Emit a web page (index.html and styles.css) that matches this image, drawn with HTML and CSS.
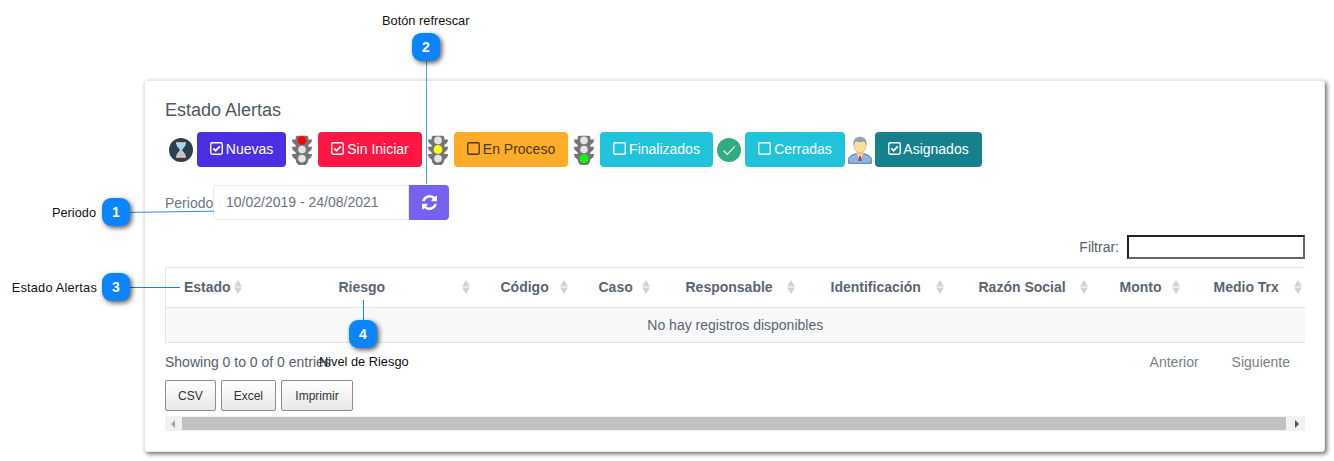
FILE: index.html
```html
<!DOCTYPE html>
<html lang="es">
<head>
<meta charset="utf-8">
<title>Estado Alertas</title>
<link rel="stylesheet" href="styles.css">
</head>
<body>
<svg class="defs" width="0" height="0" aria-hidden="true">
  <symbol id="checked" viewBox="0 0 14 14">
    <rect x=".8" y=".8" width="12.400" height="12.400" rx="1.500" fill="none" stroke="currentColor" stroke-width="1.500"/>
    <path d="M3.600 7l2.400 2.400 4.600-4.800" fill="none" stroke="currentColor" stroke-width="2"/>
  </symbol>
  <symbol id="unchecked" viewBox="0 0 14 14">
    <rect x=".8" y=".8" width="12.400" height="12.400" rx="1.500" fill="none" stroke="currentColor" stroke-width="1.500"/>
  </symbol>
  <symbol id="light" viewBox="0 0 24 34">
    <path d="M7 2h10a2 2 0 0 1 2 2v2h4c0 3-2 5-4 6v2h4c0 3-2 5-4 6v2h4c0 3-2 5-4 6a7 7 0 0 1-14 0c-2-1-4-3-4-6h4v-2c-2-1-4-3-4-6h4v-2c-2-1-4-3-4-6h4V4a2 2 0 0 1 2-2z" fill="#757575"/>
    <circle cx="12" cy="7" r="4.200" fill="#e4e4e4"/>
    <circle cx="12" cy="17" r="4.200" fill="#e4e4e4"/>
    <circle cx="12" cy="27" r="4.200" fill="#e4e4e4"/>
  </symbol>
  <symbol id="sort" viewBox="0 0 10 16">
    <path d="M5 1l4 6.500H1z" fill="#d3d3d3"/>
    <path d="M5 15L1 8.500h8z" fill="#d3d3d3"/>
  </symbol>
</svg>

<main class="card">
  <h1 class="title">Estado Alertas</h1>

  <div class="states">
    <svg class="state-icon" viewBox="0 0 24 24" aria-hidden="true">
      <circle cx="12" cy="12" r="12" fill="#2c3e50"/>
      <path d="M7.500 5h9v2.500L13 12l3.500 4.500V19h-9v-2.500L11 12 7.500 7.500z" fill="#a9d3e8"/>
      <path d="M9 17l3-3 3 3v1H9z" fill="#e8b58a"/>
      <path d="M7 5h10M7 19h10" stroke="#e8c9a8" stroke-width="1.500"/>
    </svg>
    <button class="state state-new"><svg class="box"><use href="#checked"/></svg>Nuevas</button>
    <svg class="state-icon light light-red" viewBox="0 0 24 34" aria-hidden="true"><use href="#light"/><circle cx="12" cy="7" r="4.800"/></svg>
    <button class="state state-idle"><svg class="box"><use href="#checked"/></svg>Sin Iniciar</button>
    <svg class="state-icon light light-yellow" viewBox="0 0 24 34" aria-hidden="true"><use href="#light"/><circle cx="12" cy="17" r="4.800"/></svg>
    <button class="state state-progress"><svg class="box"><use href="#unchecked"/></svg>En Proceso</button>
    <svg class="state-icon light light-green" viewBox="0 0 24 34" aria-hidden="true"><use href="#light"/><circle cx="12" cy="27" r="4.800"/></svg>
    <button class="state state-done"><svg class="box"><use href="#unchecked"/></svg>Finalizados</button>
    <svg class="state-icon" viewBox="0 0 24 24" aria-hidden="true">
      <circle cx="12" cy="12" r="12" fill="#2fac84"/>
      <path d="M6.500 12.500l3.800 3.800 7.500-8" fill="none" stroke="#e8f6f1" stroke-width="1.200"/>
    </svg>
    <button class="state state-done state-closed"><svg class="box"><use href="#unchecked"/></svg>Cerradas</button>
    <svg class="state-icon person" viewBox="0 0 24 28" aria-hidden="true">
      <path d="M.7 27.300v-4c0-3 3-4 7-5.500h8.600c4 1.500 7 2.500 7 5.500v4z" fill="#8db4e2" stroke="#4f76b0"/>
      <path d="M9 17.500l3 3 3-3-3 8z" fill="#fff"/>
      <path d="M11 20h2l.6 5h-3.200z" fill="#c0392b"/>
      <path d="M8.500 14h7v4l-3.500 2.500L8.500 18z" fill="#f0cf80"/>
      <ellipse cx="12" cy="9.500" rx="6" ry="7.500" fill="#fbe09a" stroke="#c9a35a" stroke-width=".6"/>
      <path d="M5.500 10C4.500 3 8.500 .8 12 .8s7.500 2.200 6.500 9.200c-.5-2.500-1.500-4-2.500-4.500-2 1-6 1-8 0-1 .5-2 2-2.500 4.500z" fill="#97a2b0"/>
    </svg>
    <button class="state state-assigned"><svg class="box"><use href="#checked"/></svg>Asignados</button>
  </div>

  <div class="period">
    <label class="period-label">Periodo</label>
    <div class="period-value">10/02/2019 - 24/08/2021</div>
    <button class="refresh" aria-label="Refrescar">
      <svg viewBox="0 0 1536 1536" aria-hidden="true"><path fill="currentColor" d="M1511 928q0 5-1 7-64 268-268 434.500t-478 166.500q-146 0-282.500-55t-243.500-157l-129 129q-19 19-45 19t-45-19-19-45v-448q0-26 19-45t45-19h448q26 0 45 19t19 45-19 45l-137 137q71 66 161 102t187 36q134 0 250-65t186-179q11-17 53-117 8-23 30-23h192q13 0 22.500 9.500t9.500 22.500zm25-800v448q0 26-19 45t-45 19h-448q-26 0-45-19t-19-45 19-45l138-138q-148-137-349-137-134 0-250 65t-186 179q-11 17-53 117-8 23-30 23h-199q-13 0-22.500-9.500t-9.500-22.500v-7q65-268 270-434.500t480-166.500q146 0 284 55.500t245 156.500l130-129q19-19 45-19t45 19 19 45z"/></svg>
    </button>
  </div>

  <div class="filter">
    <label class="filter-label" for="q">Filtrar:</label>
    <input class="filter-input" id="q" type="text">
  </div>

  <table class="grid">
    <colgroup>
      <col class="c1"><col class="c2"><col class="c3"><col class="c4"><col class="c5"><col class="c6"><col class="c7"><col class="c8"><col class="c9">
    </colgroup>
    <thead>
      <tr>
        <th><div class="th th-estado">Estado<svg class="sort"><use href="#sort"/></svg></div></th>
        <th><div class="th th-riesgo">Riesgo<svg class="sort"><use href="#sort"/></svg></div></th>
        <th><div class="th th-codigo">Código<svg class="sort"><use href="#sort"/></svg></div></th>
        <th><div class="th th-caso">Caso<svg class="sort"><use href="#sort"/></svg></div></th>
        <th><div class="th th-resp">Responsable<svg class="sort"><use href="#sort"/></svg></div></th>
        <th><div class="th th-ident">Identificación<svg class="sort"><use href="#sort"/></svg></div></th>
        <th><div class="th th-razon">Razón Social<svg class="sort"><use href="#sort"/></svg></div></th>
        <th><div class="th th-monto">Monto<svg class="sort"><use href="#sort"/></svg></div></th>
        <th><div class="th th-medio">Medio Trx<svg class="sort"><use href="#sort"/></svg></div></th>
      </tr>
    </thead>
    <tbody>
      <tr><td class="empty" colspan="9">No hay registros disponibles</td></tr>
    </tbody>
  </table>

  <div class="info-row">
    <span class="info">Showing 0 to 0 of 0 entries</span>
    <nav class="pager"><a>Anterior</a><a>Siguiente</a></nav>
  </div>

  <div class="exports">
    <button class="export">CSV</button>
    <button class="export">Excel</button>
    <button class="export export-print">Imprimir</button>
  </div>

  <div class="scrollbar">
    <span class="arrow arrow-left"></span>
    <span class="thumb"></span>
    <span class="arrow arrow-right"></span>
  </div>
</main>

<svg class="line-1" viewBox="0 0 84 3" aria-hidden="true"><path d="M0 2.400L84 1.200" stroke="#2a8aee" fill="none"/></svg>
<span class="line line-2"></span>
<span class="line line-3"></span>
<span class="line line-4"></span>
<span class="marker marker-1">1</span>
<span class="marker marker-2">2</span>
<span class="marker marker-3">3</span>
<span class="marker marker-4">4</span>
<span class="note note-1">Periodo</span>
<span class="note note-2">Botón refrescar</span>
<span class="note note-3">Estado Alertas</span>
<span class="note note-4">Nivel de Riesgo</span>
</body>
</html>
```

FILE: styles.css
```css
* { box-sizing: border-box; }
html, body { margin: 0; padding: 0; }
body {
  width: 1334px;
  height: 461px;
  overflow: hidden;
  background: #fff;
  font-family: "Liberation Sans", Arial, sans-serif;
  position: relative;
}
.defs { position: absolute; }

.card {
  width: 1181px;
  height: 372px;
  margin: 80px 0 0 144px;
  padding: 20px 19px 0 20px;
  background: #fff;
  border-radius: 3px;
  border: 1px solid #e6e9ed;
  box-shadow: 2px 2px 4px rgba(60, 60, 60, .75);
  color: #5a6573;
}
.title {
  margin: 0;
  font-size: 18px;
  line-height: 18px;
  font-weight: 400;
  color: #4c5866;
}
.states {
  display: flex;
  align-items: center;
  margin-top: 13px;
  padding-left: 4px;
  height: 35px;
}
.state-icon { width: 22px; height: 31px; flex: none; }
svg.state-icon[viewBox="0 0 24 24"] { width: 24px; height: 24px; }
.light circle { stroke: none; }
.light-red circle { fill: #f00; }
.light-yellow circle { fill: #ff0; }
.light-green circle { fill: #0f0; }
.light { margin: 0 5px; }
.state {
  height: 35px;
  border: 0;
  border-radius: 4px;
  padding: 0 0 2px;
  font: 14px "Liberation Sans", Arial, sans-serif;
  color: #fff;
  display: inline-flex;
  align-items: center;
  justify-content: center;
  gap: 3px;
  flex: none;
}
.box { width: 13px; height: 13px; }
.state-new { width: 89px; margin-left: 4px; background: #4b2fe3; }
.state-idle { width: 104px; background: #ff1744; }
.state-progress { width: 114px; background: #ffad28; color: #4a3b1a; }
.state-done { width: 113px; background: #20c3d9; margin-right: 4px; }
.state-closed { width: 100px; margin: 0 3px 0 4px; }
svg.person { width: 24px; height: 28px; margin-right: 3px; }
.state-assigned { width: 107px; background: #16808c; gap: 2px; }

.period {
  display: flex;
  align-items: center;
  height: 35px;
  margin-top: 18px;
}
.period-label { width: 48px; font-size: 14px; color: #6c7683; }
.period-value {
  width: 196px;
  height: 35px;
  line-height: 33px;
  padding-left: 12px;
  font-size: 14px;
  color: #6b7280;
  border: 1px solid #e8eaee;
  border-radius: 4px 0 0 4px;
}
.refresh {
  width: 40px;
  height: 35px;
  padding: 0;
  border: 0;
  border-radius: 0 4px 4px 0;
  background: #7662f0;
  color: #fff;
  display: flex;
  align-items: center;
  justify-content: center;
}
.refresh svg { width: 15px; height: 15px; }

.filter {
  display: flex;
  justify-content: flex-end;
  align-items: center;
  gap: 8px;
  margin-top: 15px;
  height: 24px;
}
.filter-label { font-size: 14px; color: #55606c; }
.filter-input {
  width: 178px;
  height: 24px;
  padding: 0;
  border-width: 2px;
  border-style: solid;
  border-color: #222 #666 #666 #222;
  background: #fff;
}

.grid {
  width: 1139px;
  margin-top: 8px;
  border-collapse: collapse;
  table-layout: fixed;
  font-size: 14px;
}
.c1 { width: 155px; }
.c2 { width: 162px; }
.c3 { width: 98px; }
.c4 { width: 87px; }
.c5 { width: 145px; }
.c6 { width: 148px; }
.c7 { width: 141px; }
.c8 { width: 94px; }
.c9 { width: 109px; }
.grid th {
  height: 40px;
  padding: 0 0 2px;
  border-top: 1px solid #e3e5e8;
  border-bottom: 1px solid #e3e5e8;
  font-weight: 700;
  color: #5a6573;
}
.grid th:first-child, .grid td { border-left: 1px solid #e3e5e8; }
.th {
  display: flex;
  align-items: center;
  padding-left: 18px;
  white-space: nowrap;
}
.sort { width: 10px; height: 16px; margin-left: auto; flex: none; }
.th-estado .sort { margin-left: 2px; }
.th-riesgo .sort { margin-right: 12px; }
.th-codigo .sort { margin-right: 12px; }
.th-caso .sort { margin-right: 17px; }
.th-resp .sort { margin-right: 17px; }
.th-ident .sort { margin-right: 16px; }
.th-razon .sort { margin-right: 13px; }
.th-monto .sort { margin-right: 15px; }
.th-medio .sort { margin-right: 2px; }
.empty {
  height: 35px;
  padding: 0;
  background: #f8f8f8;
  border-bottom: 1px solid #e3e5e8;
  text-align: center;
  color: #5a6573;
}

.info-row {
  display: flex;
  justify-content: space-between;
  align-items: center;
  height: 20px;
  margin-top: 9px;
  font-size: 14px;
}
.info { color: #55606c; }
.pager { display: flex; gap: 33px; padding-right: 15px; color: #7a7f87; }

.exports { display: flex; gap: 5px; margin-top: 8px; }
.export {
  height: 31px;
  padding: 0 12px;
  font: 12px "Liberation Sans", Arial, sans-serif;
  color: #333;
  border: 1px solid #8e8e8e;
  border-radius: 2px;
  background: linear-gradient(#fff, #e8e8e8);
}
.export-print { width: 72px; padding: 0; }

.scrollbar {
  display: flex;
  align-items: center;
  width: 1140px;
  height: 15px;
  margin-top: 5px;
  background: #f1f1f1;
}
.arrow { width: 0; height: 0; flex: none; border-style: solid; border-color: transparent; }
.arrow-left { border-width: 4px 4px 4px 0; border-right-color: #a3a3a3; margin: 0 7px 0 6px; }
.arrow-right { border-width: 4px 0 4px 4px; border-left-color: #505050; margin: 0 6px 0 9px; }
.thumb { flex: 1; height: 13px; background: #c1c1c1; }

.marker {
  position: absolute;
  width: 28px;
  height: 28px;
  border-radius: 9px;
  background: #0a84ff;
  color: #fff;
  font-size: 14px;
  font-weight: 700;
  line-height: 28px;
  text-align: center;
  box-shadow: 2px 2px 5px rgba(0, 0, 0, .65);
}
.marker-1 { left: 102px; top: 198px; }
.marker-2 { left: 412px; top: 33px; }
.marker-3 { left: 102px; top: 273px; }
.marker-4 { left: 349px; top: 320px; }
.line { position: absolute; }
.line-1 { position: absolute; left: 130px; top: 210px; width: 84px; height: 3px; }
.line-2 { left: 426px; top: 61px; width: 1px; height: 123px; background: #4aa3f5; }
.line-3 { left: 130px; top: 287px; width: 50px; height: 1px; background: #1f7fdc; }
.line-4 { left: 363px; top: 300px; width: 1px; height: 20px; background: #1f7fdc; }
.note { position: absolute; font-size: 12.800px; line-height: 14px; color: #111; white-space: nowrap; }
.note-1 { right: 1238px; top: 206px; }
.note-2 { left: 382px; top: 14px; }
.note-3 { right: 1237px; top: 281px; letter-spacing: .2px; }
.note-4 { left: 319px; top: 355px; }
```
